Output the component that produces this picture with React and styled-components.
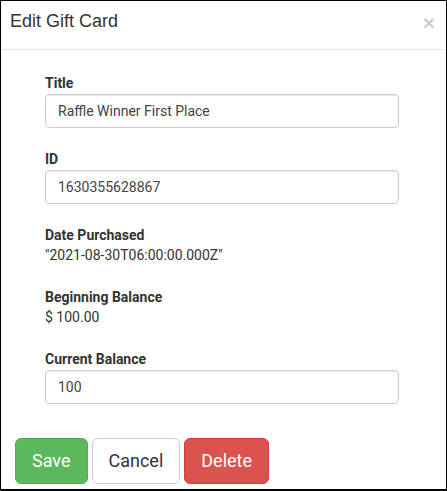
import React from "react";
import styled, { createGlobalStyle } from "styled-components";

const GlobalStyle = createGlobalStyle`
  html, body {
    margin: 0;
    padding: 0;
    background: #fff;
  }
  * {
    box-sizing: border-box;
  }
`;

const ModalContent = styled.div`
  width: 447px;
  height: 491px;
  border: 1px solid #000;
  border-bottom-width: 2px;
  background: #fff;
  font-family: Roboto, "Liberation Sans", sans-serif;
  color: #333;
  display: flex;
  flex-direction: column;
`;

const ModalHeader = styled.div`
  display: flex;
  align-items: flex-start;
  justify-content: space-between;
  padding: 10px 10px 16px 9px;
  border-bottom: 1px solid #e5e5e5;
`;

const ModalTitle = styled.h4`
  margin: 0;
  font-family: "Liberation Sans", Arial, sans-serif;
  font-weight: normal;
  font-size: 18px;
  line-height: 20px;
  color: #333;
`;

const CloseButton = styled.button`
  border: 0;
  background: transparent;
  padding: 0;
  margin: 1px 1px 0 0;
  font-family: "Liberation Sans", Arial, sans-serif;
  font-size: 21px;
  font-weight: bold;
  line-height: 1;
  color: #000;
  opacity: 0.2;
  text-shadow: 0 1px 0 #fff;
  cursor: pointer;
`;

const ModalBody = styled.div`
  padding: 23px 47px 0 44px;
`;

const FormGroup = styled.div`
  margin-bottom: 21px;
`;

const Label = styled.div`
  font-size: 14px;
  font-weight: bold;
  line-height: 20px;
  color: #333;
`;

const Input = styled.input`
  display: block;
  width: 100%;
  height: 34px;
  margin-top: 1px;
  padding: 6px 12px;
  font-family: Roboto, "Liberation Sans", sans-serif;
  font-size: 14px;
  color: #444;
  background: #fff;
  border: 1px solid #ccc;
  border-radius: 4px;
  box-shadow: inset 0 1px 1px rgba(0, 0, 0, 0.075);
  outline: none;
`;

const StaticValue = styled.div`
  font-size: 14px;
  line-height: 21px;
  color: #333;
`;

const ModalFooter = styled.div`
  display: flex;
  gap: 4px;
  padding: 13px 14px 0;
`;

const variants = {
  success: { bg: "#5cb85c", border: "#4cae4c", color: "#fff" },
  default: { bg: "#fff", border: "#ccc", color: "#333" },
  danger: { bg: "#d9534f", border: "#d43f3a", color: "#fff" },
};

const Button = styled.button`
  height: 46px;
  padding: 10px 16px;
  font-family: Roboto, "Liberation Sans", sans-serif;
  font-size: 18px;
  line-height: 24px;
  border-radius: 6px;
  border: 1px solid ${(p) => variants[p.$variant].border};
  background: ${(p) => variants[p.$variant].bg};
  color: ${(p) => variants[p.$variant].color};
  cursor: pointer;
`;

const App = () => {
  return (
    <>
      <GlobalStyle />
      <ModalContent>
        <ModalHeader>
          <ModalTitle>Edit Gift Card</ModalTitle>
          <CloseButton aria-label="Close">×</CloseButton>
        </ModalHeader>
        <ModalBody>
          <FormGroup>
            <Label>Title</Label>
            <Input defaultValue="Raffle Winner First Place" />
          </FormGroup>
          <FormGroup>
            <Label>ID</Label>
            <Input defaultValue="1630355628867" />
          </FormGroup>
          <FormGroup>
            <Label>Date Purchased</Label>
            <StaticValue>"2021-08-30T06:00:00.000Z"</StaticValue>
          </FormGroup>
          <FormGroup>
            <Label>Beginning Balance</Label>
            <StaticValue>$ 100.00</StaticValue>
          </FormGroup>
          <FormGroup>
            <Label>Current Balance</Label>
            <Input defaultValue="100" />
          </FormGroup>
        </ModalBody>
        <ModalFooter>
          <Button $variant="success">Save</Button>
          <Button $variant="default">Cancel</Button>
          <Button $variant="danger">Delete</Button>
        </ModalFooter>
      </ModalContent>
    </>
  );
};

export default App;
